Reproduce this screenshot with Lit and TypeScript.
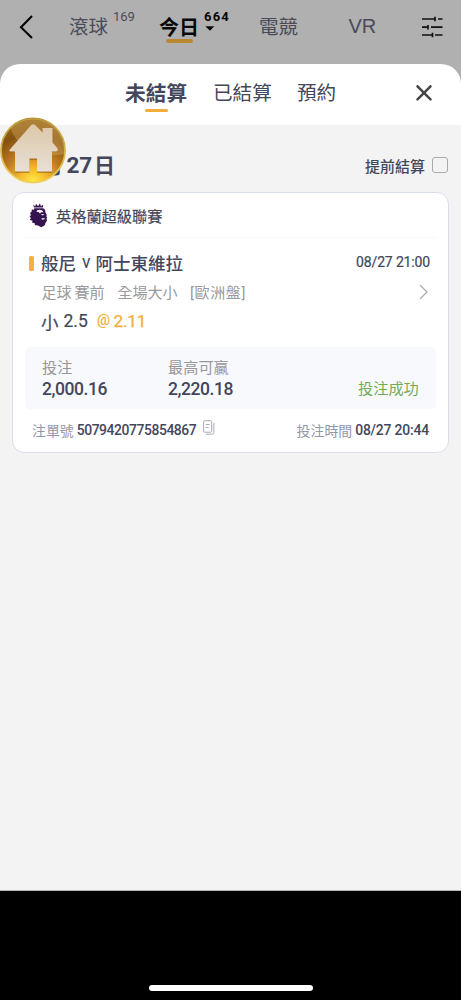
import { LitElement, html, css, svg } from 'lit';
import { customElement } from 'lit/decorators.js';

const base = css`
  :host { display: block; box-sizing: border-box; font-family: Roboto, "Noto Sans CJK TC", sans-serif; color: #43475c; white-space: nowrap; }
  * { box-sizing: border-box; }
  svg { display: block; flex: none; }
  span { white-space: nowrap; flex: none; }
`;

@customElement('sport-nav')
class SportNav extends LitElement {
  static styles = [base, css`
    .nav { display: flex; height: 64px; padding-left: 19px; align-items: flex-start; background: #b0b0b0; font-size: 19.5px; line-height: 26px; color: #494b59; }
    .back { margin-top: 15px; width: 50px; }
    .item { display: flex; margin-top: 15px; }
    .live { width: 90px; }
    .today { width: 100px; color: #08080a; font-weight: 700; font-size: 20px; }
    .label { position: relative; }
    .label.on::after { content: ""; position: absolute; left: 7px; top: 24px; width: 27px; height: 4px; border-radius: 2px; background: #b98830; }
    .count { font-size: 13px; line-height: 14px; margin: -5px 0 0 5px; letter-spacing: -.1px; }
    .today .count { font-size: 13px; letter-spacing: 1.2px; }
    .caret { margin: 2px 0 0 6px; }
    .esport { width: 89.500px; }
    .vr { width: 73.500px; font-family: "Liberation Sans", sans-serif; font-size: 20px; margin-top: 13px; }
    .filter { margin-top: 16px; }
  `];
  render() {
    return html`<nav class="nav">
      <div class="back"><svg width="15" height="24" viewBox="0 0 15 24" fill="none" stroke="#050505" stroke-width="2.1"><path d="M13 1 2 12.2 13 23"/></svg></div>
      <div class="item live"><span class="label">滾球</span><span class="count">169</span></div>
      <div class="item today"><span class="label on">今日</span>
        <div><div class="count">664</div><svg class="caret" width="10" height="5" viewBox="0 0 10 5"><path d="M.3.3h9L5 4.8z" fill="#08080a"/></svg></div></div>
      <div class="item esport"><span>電競</span></div>
      <div class="item vr"><span>VR</span></div>
      <svg class="filter" width="22" height="22" viewBox="0 0 22 22" stroke="#111" stroke-width="1.7"><path d="M0 3h13M16 3h4.500M0 11.2h5.5M9 11.2h11.500M0 19h10M13 19h7.500"/><path d="M13 .8v4.400M6 9v4.400M10.500 16.800v4.400"/></svg>
    </nav>`;
  }
}

@customElement('sheet-tabs')
class SheetTabs extends LitElement {
  static styles = [base, css`
    .tabs { display: flex; height: 61px; padding-left: 125px; font-size: 19.6px; line-height: 28px; }
    .tab { margin-top: 16px; width: 84px; }
    .first { width: 88px; font-size: 20.7px; font-weight: 700; position: relative; }
    .first::after { content: ""; position: absolute; left: 20px; top: 28.500px; width: 23px; height: 3.500px; border-radius: 2px; background: #f2ae39; }
    .last { width: 119px; }
    .close { margin-top: 21px; }
  `];
  render() {
    return html`<div class="tabs"><span class="tab first">未結算</span><span class="tab">已結算</span><span class="tab last">預約</span>
      <svg class="close" width="16" height="16" viewBox="0 0 16 16" stroke="#454545" stroke-width="2.500" stroke-linecap="round"><path d="m1.500 1.300 13 13M14.500 1.300l-13 13"/></svg></div>`;
  }
}

@customElement('bet-card')
class BetCard extends LitElement {
  static styles = [base, css`
    .card { margin: 0 12px; height: 261px; border: 1px solid #dadeea; border-radius: 12px; background: #fff; padding: 0 12px; }
    .row { display: flex; align-items: center; }
    .league { height: 45px; padding-left: 4px; border-bottom: 1px solid #f7f7f9; font-size: 15.2px; -webkit-text-stroke: .2px; }
    .league span { margin-left: 8px; }
    .teams { margin-top: 11px; height: 26px; padding-left: 4px; font-size: 17.5px; font-weight: 500; }
    .mark { width: 5px; height: 15px; border-radius: 1.500px; background: #f4b13c; margin: 2px 7px 0 0; }
    .home { width: 41px; }
    .v { width: 13.500px; font-weight: 400; }
    .kick { margin-left: auto; margin-right: 6px; font-size: 14px; font-weight: 400; letter-spacing: -.15px; -webkit-text-stroke: .2px; }
    .market { height: 32px; padding-left: 16.500px; font-size: 15px; color: #9a9a9c; }
    .a { width: 33px; } .b { width: 43px; } .c { width: 72.500px; }
    .market .league-type { letter-spacing: .6px; }
    .market svg { margin-left: auto; margin-right: 8px; margin-top: 2px; }
    .pick { height: 26px; padding: 2px 0 0 16px; font-size: 17px; font-weight: 500; }
    .pick .side { width: 22.500px; font-size: 17.500px; font-weight: 400; -webkit-text-stroke: .2px; }
    .line { width: 33.500px; font-weight: 400; font-size: 17.500px; -webkit-text-stroke: .2px; }
    .odds { display: flex; align-items: center; color: #f2ae39; }
    .at { font-size: 14.500px; line-height: 20px; width: 13px; }
    .num { font-size: 17.200px; margin-left: 3.500px; letter-spacing: -.2px; font-weight: 400; -webkit-text-stroke: .25px; }
    .money { display: grid; grid-template-columns: 126px 190px auto; height: 62px; margin-top: 14px; padding: 10px 0 0 17px; border-radius: 5px; background: #f8f9fd; grid-template-rows: 21px 22px; align-items: center; }
    .money span { font-size: 15.200px; line-height: 20px; color: #97979b; }
    .money .amount { font-size: 17.500px; font-weight: 500; letter-spacing: -.42px; color: #43475c; }
    .money .ok { grid-column: 3; grid-row: 2; color: #72ab58; font-size: 15.200px; }
    .foot { height: 41px; padding: 0 7px 0 7px; font-size: 13.900px; color: #9298a9; }
    .id { width: 126px; margin-left: 3px; color: #43475c; font-weight: 500; letter-spacing: -.42px; }
    .foot svg { margin-top: -4px; }
    .when { margin-left: auto; }
    .time { margin-left: 3px; color: #43475c; font-weight: 500; letter-spacing: -.17px; }
  `];
  render() {
    return html`<article class="card">
      <header class="row league">
        <svg width="19" height="25" viewBox="0 0 19 25"><path d="m4 1.500 2.200 2L7 .8l2.100 2.400L11 .3l.8 3 2.500-1.500-.5 2.600H5z" fill="#35134f"/><path d="M5.200 5.200h8.600c2 .6 2.700 2 2.600 4l1.400 2.800-.5 1.200.8 1.300-.6 1.100.5 1.800-1.600 2.600-.5 2-3.400 2.200-3.700-1.800-3-.5.2-1.500-3-1 .6-1.700L.8 17l1.100-2L.5 13.500 2 11.900l-1-2 1.600-1.200.2-2.200 2.200.3z" fill="#35134f"/><path d="M8 7.200q3-1.200 5.200.2l1.500 1.800-2.400.1-1.400 1.100-1.300-1.500-2 .2z" fill="#f4eff7"/><path d="m11.500 11.400 2.200-.5 1.800.7-1.600.9zM12.500 15.200l3.400-.2-.6 1.500-2.500.3z" fill="#e3d9e9"/></svg>
        <span>英格蘭超級聯賽</span>
      </header>
      <div class="row teams"><i class="mark"></i><span class="home">般尼</span><span class="v">v</span><span>阿士東維拉</span><span class="kick">08/27 21:00</span></div>
      <div class="row market"><span class="a">足球</span><span class="b">賽前</span><span class="c">全場大小</span><span class="league-type">[歐洲盤]</span>
        <svg width="9" height="16" viewBox="0 0 9 16" fill="none" stroke="#a8adb9" stroke-width="1.300"><path d="m1 1 7 7-7 7"/></svg></div>
      <div class="row pick"><span class="side">小</span><span class="line">2.5</span><div class="odds"><span class="at">@</span><span class="num">2.11</span></div></div>
      <section class="money"><span>投注</span><span>最高可贏</span><i></i><span class="amount">2,000.16</span><span class="amount">2,220.18</span><span class="ok">投注成功</span></section>
      <footer class="row foot"><span>注單號</span><span class="id">5079420775854867</span>
        <svg width="12" height="15" viewBox="0 0 12 15" fill="none" stroke="#a6abb8"><path d="M1.500.7h6.200q1 0 1 1v9.600q0 .9-1 .9H1.500q-.9 0-.9-.9V1.600q0-.9.900-.9zM2.700 4.500h4M2.700 7.500h3M10.900 3v9.700q0 1.500-1.500 1.500H3"/></svg>
        <span class="when">投注時間</span><span class="time">08/27 20:44</span></footer>
    </article>`;
  }
}

@customElement('home-button')
class HomeButton extends LitElement {
  static styles = [base, css`:host { width: 66px; height: 67px; }`];
  render() {
    return html`<svg width="66" height="67" viewBox="0 0 66 67">${svg`
      <defs>
        <radialGradient id="g" cx=".5" cy="1" r=".95"><stop offset="0" stop-color="#ffed4b"/><stop offset=".22" stop-color="#f8bc2e"/><stop offset=".5" stop-color="#bf7a20"/><stop offset=".8" stop-color="#85530f"/><stop offset="1" stop-color="#936519"/></radialGradient>
        <linearGradient id="r" x1="0" y1="0" x2="0" y2="1"><stop offset="0" stop-color="#b99a3a"/><stop offset="1" stop-color="#efcf57"/></linearGradient>
        <linearGradient id="h" x1="0" y1="0" x2="0" y2="1"><stop offset="0" stop-color="#dcc8a8"/><stop offset="1" stop-color="#e8dfd6"/></linearGradient>
        <clipPath id="c"><circle cx="33" cy="33.500" r="31.500"/></clipPath>
      </defs>
      <circle cx="33" cy="33.500" r="32" fill="url(#g)" stroke="url(#r)" stroke-width="1.800"/>
      <path d="M10 10Q22 44 65 37V0H10z" fill="#d6ac67" opacity=".4" clip-path="url(#c)"/>
      <path d="M15 56V35h-4.500q-2-.4-.6-2L31 9.200q2.200-2 4.400 0l7.100 7V12h10v13l4.800 6.500q1.400 3-1 3.500H52v21H37V43h-7.500v13z" fill="#7a480c" opacity=".45"/>
      <path d="M15 54.500V34.500h-4.500q-2-.4-.6-2L31 8.200q2.200-2 4.400 0l7.100 7.300V11h10v14.500l4.800 5.500q1.400 3-1 3.500H52v20H37V41.500h-7.500v13z" fill="url(#h)"/>
    `}</svg>`;
  }
}

@customElement('app-root')
class AppRoot extends LitElement {
  static styles = [base, css`
    :host { width: 461px; height: 1000px; overflow: hidden; background: #000; }
    .screen { background: #b0b0b0; height: 891px; border-bottom: 1px solid #b6b8b8; }
    .sheet { position: relative; height: 826px; border-radius: 20px 20px 0 0; overflow: hidden; background: linear-gradient(#fff 61px, #f3f3f3 61px); }
    .day { display: flex; align-items: center; height: 67px; padding: 13px 13px 0 42px; }
    .date { font-size: 21px; line-height: 28px; font-weight: 700; display: flex; align-items: baseline; margin-top: 1px; }
    .m { width: 24.500px; } .d { width: 27.500px; font-size: 22.500px; letter-spacing: -.2px; }
    .early { margin-left: auto; font-size: 15px; font-weight: 500; }
    .box { width: 16px; height: 16px; border: 1px solid #aaa; border-radius: 3px; margin: 0 0 0 7px; }
    .float { position: absolute; left: 0; top: 53px; }
    .bottom { height: 109px; display: flex; justify-content: center; align-items: flex-end; padding-bottom: 9px; }
    .indicator { width: 164px; height: 6px; border-radius: 3px; background: #fff; }
  `];
  render() {
    return html`<main class="screen"><sport-nav></sport-nav>
      <div class="sheet"><sheet-tabs></sheet-tabs>
        <div class="day"><div class="date"><span class="m">月</span><span class="d">27</span><span>日</span></div><span class="early">提前結算</span><i class="box"></i></div>
        <bet-card></bet-card>
        <home-button class="float"></home-button>
      </div></main>
      <div class="bottom"><i class="indicator"></i></div>`;
  }
}
